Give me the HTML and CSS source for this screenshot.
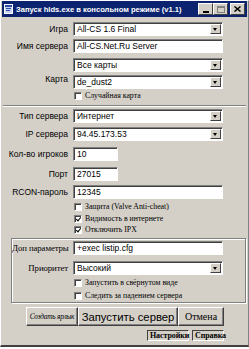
FILE: index.html
```html
<!DOCTYPE html>
<html>
	<head>
		<meta charset="UTF-8" />
		<title>Запуск hlds.exe в консольном режиме (v1.1)</title>
		<link rel="stylesheet" href="styles.css">
	</head>

	<body>
		<div class="window">
			<div class="titlebar">
				<svg class="appicon" width="9" height="10" viewBox="0 0 9 10">
					<rect x="0.5" y="0.5" width="8" height="9" fill="#c8d4f0" stroke="#ffffff"/>
					<rect x="1" y="1" width="7" height="2" fill="#2a4aa8"/>
					<rect x="2" y="4" width="5" height="1" fill="#2a4aa8"/>
					<rect x="2" y="6" width="4" height="1" fill="#2a4aa8"/>
				</svg>
				<span class="caption">Запуск hlds.exe в консольном режиме (v1.1)</span>
				<div class="capbuttons">
					<span class="capbtn"><svg width="6" height="2"><rect width="6" height="2" fill="#000"/></svg></span>
					<span class="capbtn off"><svg width="8" height="7"><rect x="0.5" y="0.5" width="7" height="6" fill="none" stroke="#808080"/><rect x="0" y="0" width="8" height="2" fill="#808080"/></svg></span>
					<span class="capbtn close"><svg width="7" height="6"><path d="M0.5 0.5 L6.5 5.5 M6.5 0.5 L0.5 5.5" stroke="#000" stroke-width="1.5"/></svg></span>
				</div>
			</div>

			<div class="content">
				<div class="row r-game">
					<label class="lbl">Игра</label>
					<div class="field select">All-CS 1.6 Final<span class="arrow"></span></div>
				</div>
				<div class="row r-name">
					<label class="lbl">Имя сервера</label>
					<div class="field">All-CS.Net.Ru Server</div>
				</div>
				<div class="row r-allmaps">
					<label class="lbl"></label>
					<div class="field select">Все карты<span class="arrow"></span></div>
				</div>
				<div class="row r-map">
					<label class="lbl lbl-up">Карта</label>
					<div class="field select">de_dust2<span class="arrow"></span></div>
				</div>
				<div class="row check r-random">
					<span class="box"></span><span class="ctext">Случайная карта</span>
				</div>

				<div class="sep s1"></div>

				<div class="row r-type">
					<label class="lbl">Тип сервера</label>
					<div class="field select">Интернет<span class="arrow"></span></div>
				</div>
				<div class="row r-ip">
					<label class="lbl">IP сервера</label>
					<div class="field select">94.45.173.53<span class="arrow"></span></div>
				</div>
				<div class="row r-players">
					<label class="lbl">Кол-во игроков</label>
					<div class="field short">10</div>
				</div>
				<div class="row r-port">
					<label class="lbl">Порт</label>
					<div class="field short">27015</div>
				</div>
				<div class="row r-rcon">
					<label class="lbl">RCON-пароль</label>
					<div class="field">12345</div>
				</div>
				<div class="row check r-vac">
					<span class="box"></span><span class="ctext">Защита (Valve Anti-cheat)</span>
				</div>
				<div class="row check r-vis">
					<span class="box on"></span><span class="ctext">Видимость в интернете</span>
				</div>
				<div class="row check r-ipx">
					<span class="box on"></span><span class="ctext">Отключить IPX</span>
				</div>

				<div class="group">
					<div class="row r-params">
						<label class="lbl serif">Доп параметры</label>
						<div class="field">+exec listip.cfg</div>
					</div>
					<div class="row r-prio">
						<label class="lbl serif">Приоритет</label>
						<div class="field select">Высокий<span class="arrow"></span></div>
					</div>
					<div class="row check r-min">
						<span class="box"></span><span class="ctext">Запустить в свёрнутом виде</span>
					</div>
					<div class="row check r-watch">
						<span class="box"></span><span class="ctext">Следить за падением сервера</span>
					</div>
				</div>

				<div class="buttons">
					<button class="btn b-shortcut">Создать ярлык</button>
					<button class="btn b-start">Запустить сервер</button>
					<button class="btn b-cancel">Отмена</button>
				</div>
				<div class="tabs">
					<span class="tab t-settings">Настройки</span>
					<span class="tab t-help">Справка</span>
				</div>
			</div>
		</div>
	</body>
</html>
```

FILE: styles.css
```css
html, body {
	margin:0px; padding:0px;
	background:#ffffff;
}

body {
	font-family: "Liberation Sans", Arial, sans-serif;
	font-size:8.5px;
	color:#000;
}

.window {
	width:247px; height:344px;
	background:#d4d0c8;
	border-left:1px solid #ffffff;
	border-top:1px solid #ffffff;
	border-right:1px solid #808080;
	border-bottom:2px solid #404040;
	display:flex; flex-direction:column;
}

/* caption */
.titlebar {
	height:16px;
	margin:0px 1px;
	background:#0c2470;
	display:flex; align-items:center;
	color:#fff;
}
.appicon { margin:0px 3px 0px 2px }
.caption {
	font-family:"Liberation Sans", sans-serif;
	font-weight:bold;
	font-size:7.6px;
	white-space:nowrap;
}
.capbuttons { margin-left:auto; margin-right:2px; display:flex }
.capbtn {
	width:13px; height:10px;
	background:#d4d0c8;
	border-style:solid; border-width:1px;
	border-color:#fff #404040 #404040 #fff;
	display:flex; align-items:flex-end; justify-content:center;
}
.capbtn svg { margin-bottom:1px }
.capbtn.off { align-items:center }
.capbtn.off svg { margin-bottom:0px }
.capbtn.close { margin-left:2px; align-items:center }
.capbtn.close svg { margin-bottom:0px }

/* form */
.content { padding-top:5px; display:flex; flex-direction:column }

.row { display:flex; align-items:center; height:14px }
.lbl {
	width:67px;
	margin-right:5px;
	text-align:right;
	white-space:nowrap;
}
.lbl-up { position:relative; top:-3px }
.serif { font-family:"Liberation Serif", serif; font-size:8.8px; letter-spacing:-0.1px }

.field {
	box-sizing:border-box;
	width:150px; height:14px;
	background:#fff;
	border-style:solid; border-width:1px;
	border-color:#808080 #fff #fff #808080;
	box-shadow:inset 1px 1px 0px #404040;
	padding:0px 2px 0px 3px;
	line-height:12px;
	white-space:nowrap;
	position:relative;
}
.field.short { width:45px }
.arrow {
	position:absolute; right:1px; top:1px;
	box-sizing:border-box;
	width:11px; height:10px;
	background:#d4d0c8;
	border-style:solid; border-width:1px;
	border-color:#fff #404040 #404040 #fff;
}
.arrow::after {
	content:"";
	position:absolute; left:2px; top:3px;
	border-left:2.5px solid transparent;
	border-right:2.5px solid transparent;
	border-top:3px solid #000;
}

.check { height:9px; padding-left:73px }
.box {
	box-sizing:border-box;
	width:8px; height:8px;
	background:#fff;
	border-style:solid; border-width:1px;
	border-color:#808080 #fff #fff #808080;
	box-shadow:inset 1px 1px 0px #404040;
	margin-right:3px;
	position:relative;
}
.box.on::after {
	content:"";
	position:absolute; left:1.5px; top:0px;
	width:2px; height:4px;
	border-right:1.5px solid #000;
	border-bottom:1.5px solid #000;
	transform:rotate(40deg);
}
.ctext {
	font-family:"Liberation Serif", serif;
	font-size:7.8px;
	white-space:nowrap;
}

.sep {
	height:0px;
	margin-left:2px; margin-right:2px;
	border-top:1px solid #808080;
	border-bottom:1px solid #fff;
}

/* vertical rhythm, taken row by row from the dialog */
.r-name    { margin-top:3px }
.r-allmaps { margin-top:5px }
.r-map     { margin-top:3px }
.r-random  { margin-top:2px }
.s1        { margin-top:5px }
.r-type    { margin-top:2px }
.r-ip      { margin-top:4px }
.r-players { margin-top:6px }
.r-port    { margin-top:6px }
.r-rcon    { margin-top:4px }
.r-vac     { margin-top:3px }
.r-vis     { margin-top:3px }
.r-ipx     { margin-top:2px }

.group {
	margin:4px 2px 0px 10px;
	padding:2px 0px 2px 0px;
	border:1px solid #808080;
	box-shadow:inset 1px 1px 0px #fff, 1px 1px 0px #fff;
	display:flex; flex-direction:column;
}
.group .lbl { width:56px }
.group .check { padding-left:62px }
.r-prio  { margin-top:6px }
.r-min   { margin-top:3px }
.r-watch { margin-top:4px }

.buttons { display:flex; margin-top:4px; padding-left:25px }
.btn {
	box-sizing:border-box;
	height:19px;
	margin:0px; padding:0px;
	background:#d4d0c8;
	border-style:solid; border-width:1px;
	border-color:#fff #404040 #404040 #fff;
	box-shadow:inset -1px -1px 0px #808080;
	color:#000;
	white-space:nowrap;
}
.b-shortcut { width:52px; font-family:"Liberation Serif", serif; font-style:italic; font-size:7.3px; letter-spacing:-0.2px }
.b-start    { width:100px; font-family:"Liberation Sans", sans-serif; font-size:11.3px }
.b-cancel   { width:46px; font-family:"Liberation Serif", serif; font-size:10px }

.tabs { display:flex; gap:3px; margin-top:4px; padding-left:146px }
.tab {
	box-sizing:border-box;
	height:11px;
	padding:0px 2px;
	border-style:solid; border-width:1px;
	border-color:#404040 #fff #fff #404040;
	font-family:"Liberation Serif", serif;
	font-weight:bold;
	font-size:8px;
	line-height:9px;
	letter-spacing:-0.1px;
}
.t-settings { width:42px }
.t-help     { width:32px }
```
